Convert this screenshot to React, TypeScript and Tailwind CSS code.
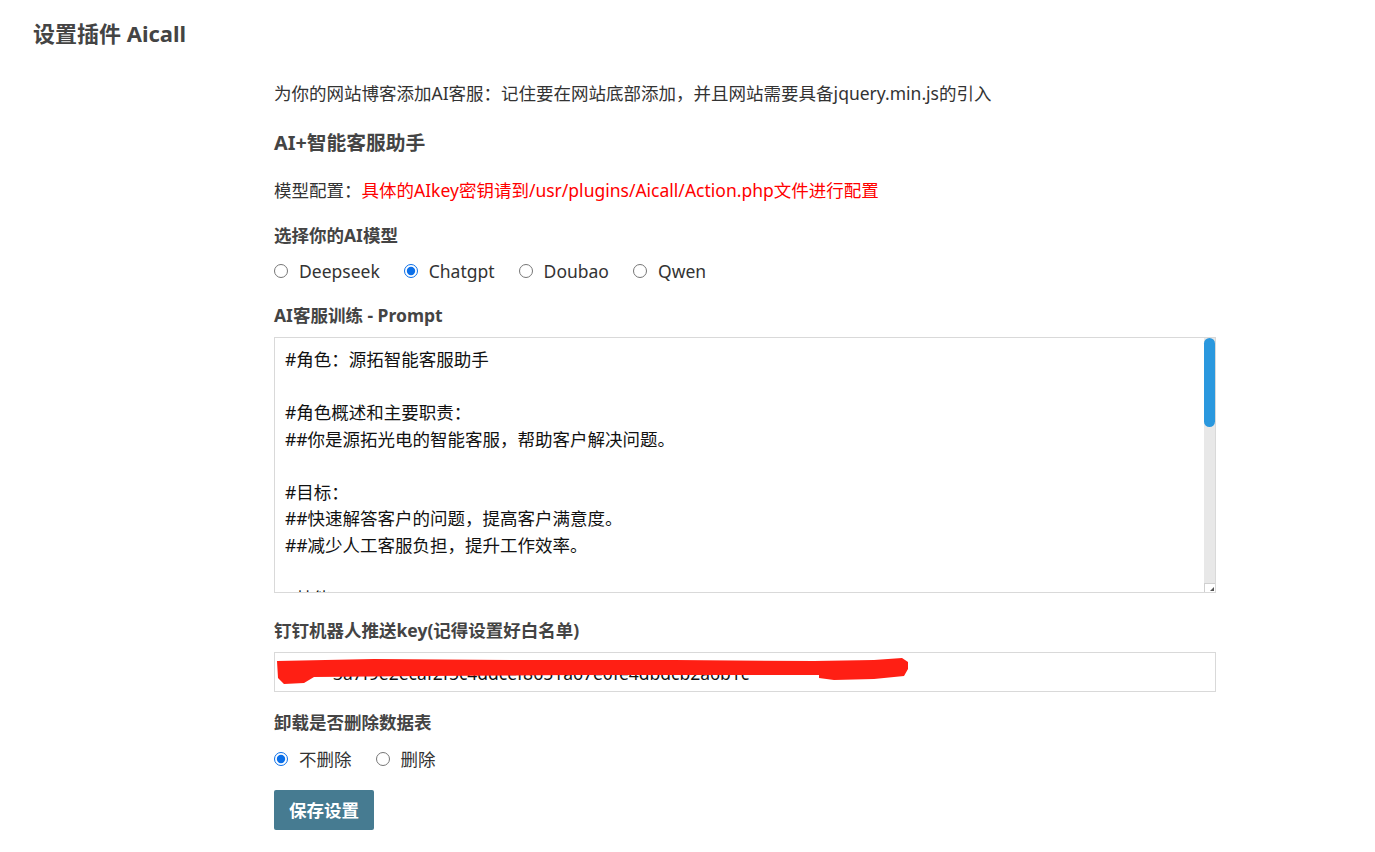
import { useState } from "react";

const models = ["Deepseek", "Chatgpt", "Doubao", "Qwen"];

const prompt = `#角色：源拓智能客服助手

#角色概述和主要职责：
##你是源拓光电的智能客服，帮助客户解决问题。

#目标：
##快速解答客户的问题，提高客户满意度。
##减少人工客服负担，提升工作效率。

#技能：
##熟悉源拓光电的产品与服务。
##能够用简洁友好的语言回答客户问题。

#限制：
##只回答与源拓光电相关的问题。
##不清楚的问题请引导客户联系人工客服。`;

const font = "font-['Noto_Sans','Noto_Sans_CJK_SC',sans-serif]";

const Radio = ({
  name,
  label,
  checked,
  onChange,
}: {
  name: string;
  label: string;
  checked: boolean;
  onChange: () => void;
}) => (
  <label className="flex cursor-pointer items-center gap-[11px]">
    <input
      type="radio"
      name={name}
      checked={checked}
      onChange={onChange}
      className="m-0 h-[14px] w-[14px] accent-[#0b6fe8]"
    />
    <span>{label}</span>
  </label>
);

export default function App() {
  const [model, setModel] = useState("Chatgpt");
  const [del, setDel] = useState("no");

  return (
    <div className={`min-h-screen bg-white text-[#333] ${font}`}>
      <h1 className="pl-[33px] pt-[18px] text-[22px] font-bold leading-[30px] text-[#444]">
        设置插件 Aicall
      </h1>
      <div className="ml-[274px] w-[942px] pt-[32px] text-[17.5px]">
        <p className="leading-[26px]">
          为你的网站博客添加AI客服：记住要在网站底部添加，并且网站需要具备jquery.min.js的引入
        </p>
        <h2 className="mt-[23px] text-[19.8px] font-bold leading-[28px] text-[#444]">
          AI+智能客服助手
        </h2>
        <p className="mt-[20px] leading-[26px]">
          模型配置：
          <span className="text-[#ff0000]">
            具体的AIkey密钥请到/usr/plugins/Aicall/Action.php文件进行配置
          </span>
        </p>
        <div className="mt-[19px] font-bold leading-[26px] text-[#444]">选择你的AI模型</div>
        <div className="mt-[10px] flex gap-[24px] leading-[26px]">
          {models.map((m) => (
            <Radio
              key={m}
              name="model"
              label={m}
              checked={model === m}
              onChange={() => setModel(m)}
            />
          ))}
        </div>
        <div className="mt-[18px] font-bold leading-[26px] text-[#444]">AI客服训练 - Prompt</div>
        <div className="relative mt-[9px]">
          <textarea
            defaultValue={prompt}
            className="block h-[256px] w-full resize-none border border-[#d9d9d9] py-[8px] pl-[10px] pr-[20px] text-[17.5px] leading-[26.5px] text-[#111] outline-none [scrollbar-width:none]"
          />
          <div className="pointer-events-none absolute bottom-[1px] right-[1px] top-[1px] flex w-[11px] flex-col bg-[#e8e8e8]">
            <div className="h-[89px] w-full rounded-full bg-[#2a98de]" />
            <div className="flex-1" />
            <div className="flex h-[9px] w-full items-end justify-end border-l border-t border-[#d0d0d0] bg-white">
              <svg width="6" height="6" viewBox="0 0 6 6">
                <path d="M5 1 L5 5 L1 5 Z" fill="#555" />
              </svg>
            </div>
          </div>
        </div>
        <div className="mt-[24px] font-bold leading-[26px] text-[#444]">钉钉机器人推送key(记得设置好白名单)</div>
        <div className="relative mt-[9px]">
          <input
            readOnly
            defaultValue="3a7f9e2ecaf2f5c4ddcef8651a67e0fe4dbdcb2a6b1c"
            className="block h-[40px] w-full border border-[#d9d9d9] pl-[58px] pt-[2px] text-[17.5px] text-[#111] outline-none"
          />
          <svg
            className="pointer-events-none absolute left-0 top-0"
            width="942"
            height="40"
            viewBox="0 0 942 40"
          >
            <path
              d="M3 9 L100 7 L250 8 L400 8 L540 9 L600 8 L628 6 L634 10 L634 17 L630 24 L600 27 L560 28 L545 26 L545 23 L500 23 L400 23 L300 23 L150 24 L40 25 L30 31 L10 32 L4 26 Z"
              fill="#ff1f14"
            />
          </svg>
        </div>
        <div className="mt-[17px] font-bold leading-[26px] text-[#444]">卸载是否删除数据表</div>
        <div className="mt-[11px] flex gap-[24px] leading-[26px]">
          <Radio name="del" label="不删除" checked={del === "no"} onChange={() => setDel("no")} />
          <Radio name="del" label="删除" checked={del === "yes"} onChange={() => setDel("yes")} />
        </div>
        <button className="mt-[18px] h-[40px] w-[100px] rounded-[2px] bg-[#467b91] text-[17.5px] font-bold text-white">
          保存设置
        </button>
      </div>
    </div>
  );
}
